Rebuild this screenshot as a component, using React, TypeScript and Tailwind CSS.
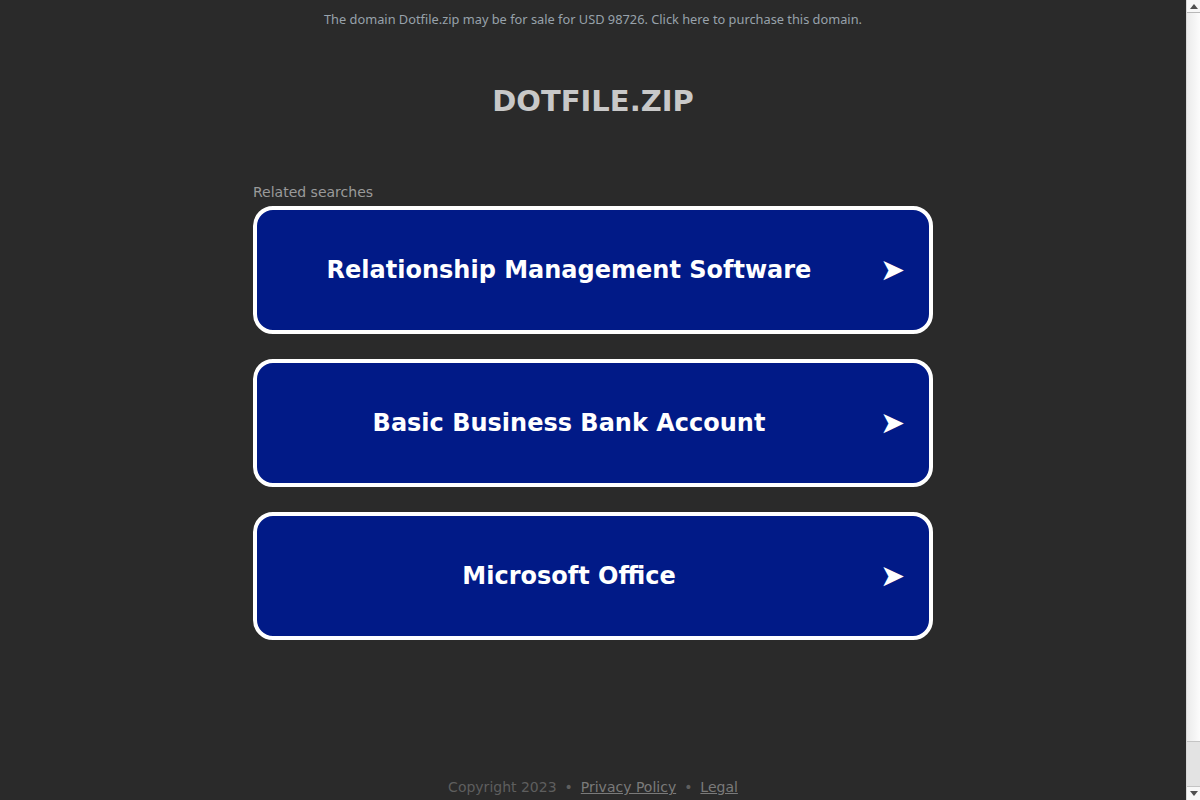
import React from "react";

const items = [
  "Relationship Management Software",
  "Basic Business Bank Account",
  "Microsoft Office",
];

function FakeScrollbar() {
  return (
    <div className="fixed right-0 top-0 flex h-screen w-[14px] flex-col border-l border-[#d8d8d8] bg-[#f4f4f4]">
      <div className="flex h-[13px] items-center justify-center border-b border-[#b8b8b8] bg-[#f7f7f7]">
        <svg width="8" height="5" viewBox="0 0 8 5">
          <polygon points="4,0 8,5 0,5" fill="#505050" />
        </svg>
      </div>
      <div className="flex-1 border-b border-[#c4c4c4] bg-gradient-to-r from-[#ebebeb] to-[#fcfcfc]" />
      <div className="h-[45px] border-b border-[#c4c4c4] bg-[#e3e3e3]" />
      <div className="flex h-[13px] items-center justify-center bg-[#f7f7f7]">
        <svg width="8" height="5" viewBox="0 0 8 5">
          <polygon points="0,0 8,0 4,5" fill="#505050" />
        </svg>
      </div>
    </div>
  );
}

export default function App() {
  return (
    <div className="min-h-screen w-full bg-[#2a2a2a]">
      <div
        className="mr-[14px] pb-[50px]"
        style={{ fontFamily: '"DejaVu Sans", sans-serif' }}
      >
        <div
          className="py-[11px] text-center text-[12.8px] leading-4 text-[#98a2ab]"
          style={{ fontFamily: '"Noto Sans", "Open Sans", sans-serif' }}
        >
          The domain Dotfile.zip may be for sale for USD 98726. Click here to purchase this domain.
        </div>
        <h1 className="mt-[46px] text-center text-[29px] font-bold leading-[34px] text-[#c8c8c8]">
          DOTFILE.ZIP
        </h1>
        <div className="mx-auto mt-[64px] w-[680px]">
          <div className="mb-[4px] text-[14px] leading-5 text-[#9a9a9a]">Related searches</div>
          <div className="flex flex-col gap-[25px]">
            {items.map((t) => (
              <div
                key={t}
                className="flex h-[128px] items-center gap-[26px] rounded-[20px] border-4 border-white bg-[#011a87] px-[27px]"
              >
                <div className="flex-1 text-center text-[24px] font-bold leading-8 text-white">{t}</div>
                <div className="w-[22px] text-center text-[30px] leading-8 text-white">➤</div>
              </div>
            ))}
          </div>
        </div>
        <div className="mt-[137px] text-center text-[14px] leading-5 text-[#5e5e5e]">
          Copyright 2023 <span className="mx-[3.5px]">•</span>{" "}
          <a className="text-[#7a7a7a] underline">Privacy Policy</a>{" "}
          <span className="mx-[3.5px]">•</span> <a className="text-[#7a7a7a] underline">Legal</a>
        </div>
      </div>
      <FakeScrollbar />
    </div>
  );
}
